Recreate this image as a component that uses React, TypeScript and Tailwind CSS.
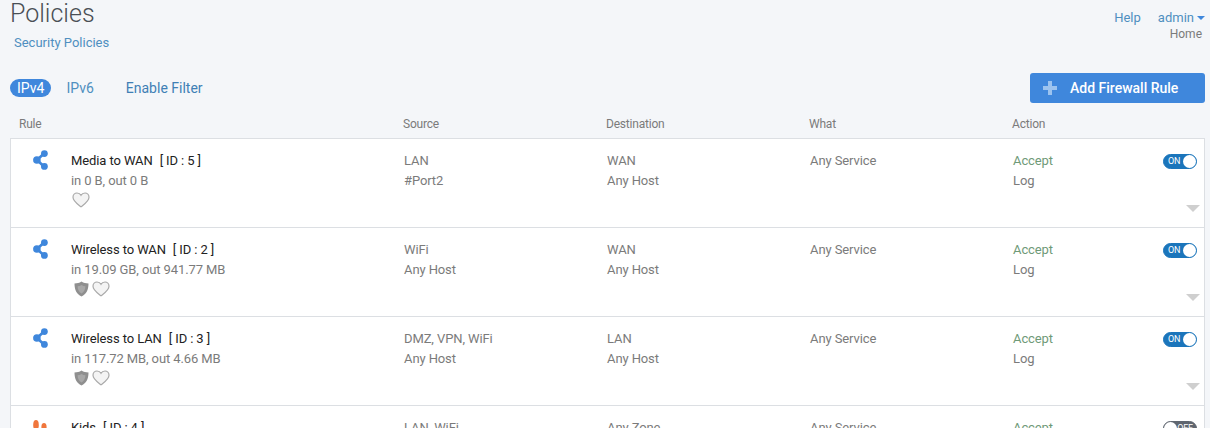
import React from 'react';

interface Rule {
  name: string;
  id: number;
  traffic: string;
  source: string[];
  destination: string[];
  enabled: boolean;
  shield: boolean;
  kids?: boolean;
}

const rules: Rule[] = [
  { name: 'Media to WAN', id: 5, traffic: 'in 0 B, out 0 B', source: ['LAN', '#Port2'], destination: ['WAN', 'Any Host'], enabled: true, shield: false },
  { name: 'Wireless to WAN', id: 2, traffic: 'in 19.09 GB, out 941.77 MB', source: ['WiFi', 'Any Host'], destination: ['WAN', 'Any Host'], enabled: true, shield: true },
  { name: 'Wireless to LAN', id: 3, traffic: 'in 117.72 MB, out 4.66 MB', source: ['DMZ, VPN, WiFi', 'Any Host'], destination: ['LAN', 'Any Host'], enabled: true, shield: true },
  { name: 'Kids', id: 4, traffic: '', source: ['LAN, WiFi', 'Any Host'], destination: ['Any Zone', 'Any Host'], enabled: false, shield: false, kids: true },
];

const ShareIcon = () => (
  <svg width="15" height="20" viewBox="0 0 15 20" className="-mt-[1px] text-[#3f87dc]">
    <path d="M11 3.5 L4 10 L11 16.5" fill="none" stroke="currentColor" strokeWidth="2.6" />
    <circle cx="11.4" cy="3.6" r="3.4" fill="currentColor" />
    <circle cx="3.9" cy="10" r="3.8" fill="currentColor" />
    <circle cx="11.4" cy="16.4" r="3.4" fill="currentColor" />
  </svg>
);

const KidsIcon = () => (
  <svg width="16" height="20" viewBox="0 0 16 20" className="mt-[2px] text-[#f0763c]">
    <ellipse cx="3" cy="5" rx="2.8" ry="5" fill="currentColor" />
    <path d="M0 20 L3 8 L6 20 Z" fill="currentColor" />
    <ellipse cx="11" cy="7" rx="2.6" ry="4" fill="currentColor" />
    <path d="M7 20 L11 10 L15.5 20 Z" fill="currentColor" />
  </svg>
);

const HeartIcon = () => (
  <svg width="18" height="16" viewBox="0 0 18 16">
    <path
      d="M9 14.8 C5 11.6 1 9 1 5.2 C1 2.8 2.9 1 5 1 C6.7 1 8.2 1.9 9 3.3 C9.8 1.9 11.3 1 13 1 C15.1 1 17 2.8 17 5.2 C17 9 13 11.6 9 14.8 Z"
      fill="#f4f4f4"
      stroke="#a9a9a9"
      strokeWidth="1.2"
    />
  </svg>
);

const ShieldIcon = () => (
  <svg width="15" height="16" viewBox="0 0 15 16" className="ml-[2px]">
    <path d="M7.5 0.5 C9.5 2 12 2.4 14.5 2.4 C14.5 8.5 12.5 13 7.5 15.5 C2.5 13 0.5 8.5 0.5 2.4 C3 2.4 5.5 2 7.5 0.5 Z" fill="#8f8f8f" />
    <path d="M7.5 4 C8.7 4.8 10 5.2 11.4 5.2 C11.4 8.6 10 11 7.5 12.4 C5 11 3.6 8.6 3.6 5.2 C5 5.2 6.3 4.8 7.5 4 Z" fill="#a8a8a8" />
  </svg>
);

const Toggle = ({ on }: { on: boolean }) =>
  on ? (
    <div className="flex h-[15px] w-[34px] items-center justify-between rounded-full border border-[#1b75bb] bg-[#1b75bb] pl-[4px] text-[9px] leading-none text-white">
      <span>ON</span>
      <span className="h-[13px] w-[13px] rounded-full bg-white" />
    </div>
  ) : (
    <div className="flex h-[15px] w-[34px] items-center justify-between rounded-full border border-[#5f6670] bg-[#5f6670] pr-[3px] text-[9px] leading-none text-white">
      <span className="h-[13px] w-[13px] rounded-full bg-white" />
      <span>OFF</span>
    </div>
  );

const RuleRow = ({ rule }: { rule: Rule }) => (
  <div className="relative grid h-[89px] shrink-0 grid-cols-[393px_203px_203px_203px_1fr] border-b border-[#dcdfe3] pt-[12px] text-[13px] leading-[20px] tracking-[-0.1px] text-[#7b7b7b]">
    <div className="flex">
      <div className="flex w-[60px] shrink-0 justify-center pr-[1px]">
        {rule.kids ? <KidsIcon /> : <ShareIcon />}
      </div>
      <div>
        <div className="text-[#222222]">
          {rule.name}
          <span className="ml-[7px]">[ ID : {rule.id} ]</span>
        </div>
        <div>{rule.traffic}</div>
        <div className="mt-[1px] flex items-center gap-[3px] pl-[1px]">
          {rule.shield && <ShieldIcon />}
          <HeartIcon />
        </div>
      </div>
    </div>
    <div>
      {rule.source.map((s) => (
        <div key={s}>{s}</div>
      ))}
    </div>
    <div>
      {rule.destination.map((d) => (
        <div key={d}>{d}</div>
      ))}
    </div>
    <div>Any Service</div>
    <div className="flex justify-between pr-[7px]">
      <div>
        <div className="text-[#6f9a78]">Accept</div>
        <div>Log</div>
      </div>
      <div className="pt-[3px]">
        <Toggle on={rule.enabled} />
      </div>
    </div>
    <div className="absolute bottom-[15px] right-[4px] h-0 w-0 border-x-[7px] border-t-[7px] border-x-transparent border-t-[#cfcfcf]" />
  </div>
);

export default function App() {
  return (
    <div className="flex h-[428px] w-[1210px] flex-col overflow-hidden bg-[#f4f6f9] font-['Roboto',sans-serif]">
      {/* Header */}
      <div className="flex h-[70px] shrink-0 justify-between pl-[10px] pr-[5px]">
        <div>
          <h1 className="pt-[1px] text-[25px] leading-[26px] font-light text-[#4a4f55]">Policies</h1>
          <div className="mt-[7px] pl-[4px] text-[13px] leading-[18px] text-[#4f8fc0]">Security Policies</div>
        </div>
        <div className="pt-[10px] text-right text-[13px] leading-[16px]">
          <div className="flex items-center justify-end text-[#4f8fc0]">
            <span>Help</span>
            <span className="ml-[17px]">admin</span>
            <span className="ml-[3px] h-0 w-0 border-x-[4px] border-t-[4px] border-x-transparent border-t-[#3f87dc]" />
          </div>
          <div className="pr-[3px] text-[12px] leading-[17px] text-[#7b7b7b]">Home</div>
        </div>
      </div>

      {/* Toolbar */}
      <div className="flex h-[36px] shrink-0 items-center justify-between pl-[10px] pr-[5px] text-[14px]">
        <div className="flex items-center">
          <span className="rounded-full bg-[#3f87dc] px-[7px] leading-[18px] text-white">IPv4</span>
          <span className="ml-[15px] text-[#4f8fc0]">IPv6</span>
          <span className="ml-[32px] text-[#3f7fb5]">Enable Filter</span>
        </div>
        <button className="flex h-[30px] w-[175px] items-center rounded-[3px] bg-[#3f87dc] pl-[13px] text-[14px] font-medium text-white">
          <svg width="14" height="14" viewBox="0 0 14 14" className="mr-[13px]">
            <path d="M5 0h4v5h5v4H9v5H5V9H0V5h5z" fill="#9cc3ef" />
          </svg>
          Add Firewall Rule
        </button>
      </div>

      {/* Column headers */}
      <div className="grid h-[32px] shrink-0 grid-cols-[384px_203px_203px_203px_1fr] items-center pl-[19px] pt-[4px] text-[12px] tracking-[-0.2px] text-[#7b7b7b]">
        <span>Rule</span>
        <span>Source</span>
        <span>Destination</span>
        <span>What</span>
        <span>Action</span>
      </div>

      {/* Rows */}
      <div className="ml-[10px] mr-[5px] flex flex-col border-x border-t border-[#dcdfe3] bg-white">
        {rules.map((r) => (
          <RuleRow key={r.id} rule={r} />
        ))}
      </div>
    </div>
  );
}
